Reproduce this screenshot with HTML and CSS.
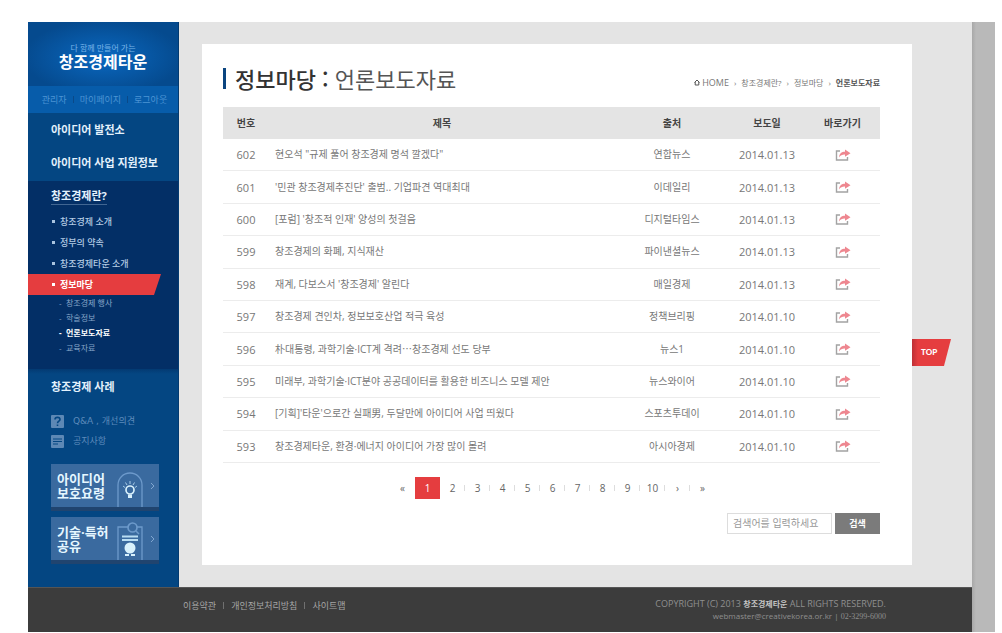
FILE: index.html
```html
<!DOCTYPE html>
<html lang="ko">
<head>
<meta charset="utf-8">
<title>창조경제타운 - 언론보도자료</title>
<link rel="stylesheet" href="styles.css">
</head>
<body>
<svg width="0" height="0" class="defs" aria-hidden="true">
  <symbol id="share" viewBox="0 0 16 12">
    <path d="M5 2H1.5v9h11V8" fill="none" stroke="#a3a3a3" stroke-width="1.4"/>
    <path d="M4 8.5C4.500 4.500 6.500 2.800 10 2.800V.5L15.500 4.200 10 7.800V5.500C7.500 5.400 5.500 6 4 8.500z" fill="#ee8790"/>
  </symbol>
</svg>
<div class="page">
  <div class="site">
    <div class="columns">
      <aside class="sidebar">
        <a class="brand" href="#"><span class="brand-sub">다 함께 만들어 가는</span><span class="brand-name">창조경제타운</span></a>
        <div class="util"><a href="#">관리자</a><i></i><a href="#">마이페이지</a><i></i><a href="#">로그아웃</a></div>
        <nav>
          <div class="group"><a class="nav-item" href="#">아이디어 발전소</a><a class="nav-item" href="#">아이디어 사업 지원정보</a></div>
          <div class="open">
            <a class="open-title" href="#">창조경제란?</a>
            <ul class="sub">
              <li><a href="#">창조경제 소개</a></li>
              <li><a href="#">정부의 약속</a></li>
              <li><a href="#">창조경제타운 소개</a></li>
              <li class="active"><a href="#">정보마당</a></li>
            </ul>
            <ul class="leaf">
              <li><a href="#">창조경제 행사</a></li>
              <li><a href="#">학술정보</a></li>
              <li class="current"><a href="#">언론보도자료</a></li>
              <li><a href="#">교육자료</a></li>
            </ul>
          </div>
          <div class="group after"><a class="nav-item" href="#">창조경제 사례</a></div>
        </nav>
        <div class="help">
          <a href="#"><svg width="13" height="13" viewBox="0 0 13 13"><rect width="13" height="13" rx="1" fill="#5d88b5"/><path d="M4 4.500C4 1.700 9 1.700 9 4.500 9 6.200 6.500 6 6.500 8.200M6.500 9.500v1.600" fill="none" stroke="#044682" stroke-width="1.600"/></svg>Q&amp;A , 개선의견</a>
          <a href="#"><svg width="13" height="13" viewBox="0 0 13 13"><rect width="13" height="13" rx="1" fill="#5d88b5"/><path d="M2 4h9M2 6.500h9M2 9h5" stroke="#044682"/></svg>공지사항</a>
        </div>
        <div class="banners">
          <a class="banner" href="#"><span>아이디어<br>보호요령</span>
            <svg width="26" height="35" viewBox="0 0 26 35" fill="none"><path d="M1 35V13a12 12 0 0 1 24 0V35" stroke="#6d9acb" stroke-width="1.300"/><circle cx="13" cy="18" r="4" stroke="#d8f1fc" stroke-width="1.700"/><path d="M11 22.500h4v3.500h-4z" fill="#d8f1fc"/><path d="M13 9v3M8.500 10.500l1.500 2.500M17.500 10.500L16 13M6 14l2 1.500M20 14l-2 1.500" stroke="#a9cde9"/></svg>
            <svg class="chev" width="5" height="8" viewBox="0 0 5 8"><path d="M1 1l3 3-3 3" fill="none" stroke="#80a6d0"/></svg></a>
          <a class="banner" href="#"><span>기술·특허<br>공유</span>
            <svg width="26" height="39" viewBox="0 0 26 39" fill="none"><path d="M1 39V6h10M20 6h5v33" stroke="#6d9acb" stroke-width="1.300"/><circle cx="15.500" cy="6.500" r="4.500" stroke="#6d9acb" stroke-width="1.700"/><path d="M19 10l3 3" stroke="#6d9acb" stroke-width="1.500"/><path d="M5 15.500h16M5 19h16" stroke="#b9ddf3" stroke-width="2.200"/><circle cx="13" cy="27" r="5.500" fill="#d8f1fc"/><path d="M8 33h4v2H8zM14 33h4v2h-4z" fill="#d8f1fc"/></svg>
            <svg class="chev" width="5" height="8" viewBox="0 0 5 8"><path d="M1 1l3 3-3 3" fill="none" stroke="#80a6d0"/></svg></a>
        </div>
      </aside>
      <main class="content">
        <section class="card">
          <header class="heading">
            <h1><b>정보마당 :</b> 언론보도자료</h1>
            <div class="crumbs"><svg width="6" height="7" viewBox="0 0 6 7"><path d="M.5 3.500L3 1l2.500 2.500M1.200 3v3h3.600V3" fill="none" stroke="#555"/></svg><a href="#">HOME</a><span>›</span><a href="#">창조경제란?</a><span>›</span><a href="#">정보마당</a><span>›</span><b>언론보도자료</b></div>
          </header>
          <table class="news">
            <thead><tr><th class="num">번호</th><th>제목</th><th class="src">출처</th><th class="date">보도일</th><th class="go">바로가기</th></tr></thead>
            <tbody>
              <tr><td>602</td><td class="title">현오석 "규제 풀어 창조경제 명석 깔겠다"</td><td>연합뉴스</td><td>2014.01.13</td><td><a href="#" aria-label="바로가기"><svg width="16" height="12"><use href="#share"/></svg></a></td></tr>
              <tr><td>601</td><td class="title">'민관 창조경제추진단' 출범.. 기업파견 역대최대</td><td>이데일리</td><td>2014.01.13</td><td><a href="#" aria-label="바로가기"><svg width="16" height="12"><use href="#share"/></svg></a></td></tr>
              <tr><td>600</td><td class="title">[포럼] '창조적 인재' 양성의 첫걸음</td><td>디지털타임스</td><td>2014.01.13</td><td><a href="#" aria-label="바로가기"><svg width="16" height="12"><use href="#share"/></svg></a></td></tr>
              <tr><td>599</td><td class="title">창조경제의 화폐, 지식재산</td><td>파이낸셜뉴스</td><td>2014.01.13</td><td><a href="#" aria-label="바로가기"><svg width="16" height="12"><use href="#share"/></svg></a></td></tr>
              <tr><td>598</td><td class="title">재계, 다보스서 '창조경제' 알린다</td><td>매일경제</td><td>2014.01.13</td><td><a href="#" aria-label="바로가기"><svg width="16" height="12"><use href="#share"/></svg></a></td></tr>
              <tr><td>597</td><td class="title">창조경제 견인차, 정보보호산업 적극 육성</td><td>정책브리핑</td><td>2014.01.10</td><td><a href="#" aria-label="바로가기"><svg width="16" height="12"><use href="#share"/></svg></a></td></tr>
              <tr><td>596</td><td class="title">朴대통령, 과학기술·ICT계 격려⋯창조경제 선도 당부</td><td>뉴스1</td><td>2014.01.10</td><td><a href="#" aria-label="바로가기"><svg width="16" height="12"><use href="#share"/></svg></a></td></tr>
              <tr><td>595</td><td class="title">미래부, 과학기술·ICT분야 공공데이터를 활용한 비즈니스 모델 제안</td><td>뉴스와이어</td><td>2014.01.10</td><td><a href="#" aria-label="바로가기"><svg width="16" height="12"><use href="#share"/></svg></a></td></tr>
              <tr><td>594</td><td class="title">[기획]'타운'으로간 실패男, 두달만에 아이디어 사업 띄웠다</td><td>스포츠투데이</td><td>2014.01.10</td><td><a href="#" aria-label="바로가기"><svg width="16" height="12"><use href="#share"/></svg></a></td></tr>
              <tr><td>593</td><td class="title">창조경제타운, 환경·에너지 아이디어 가장 많이 몰려</td><td>아시아경제</td><td>2014.01.10</td><td><a href="#" aria-label="바로가기"><svg width="16" height="12"><use href="#share"/></svg></a></td></tr>
            </tbody>
          </table>
          <nav class="pager"><a class="plain" href="#">«</a><a class="on plain" href="#">1</a><a href="#">2</a><a href="#">3</a><a href="#">4</a><a href="#">5</a><a href="#">6</a><a href="#">7</a><a href="#">8</a><a href="#">9</a><a href="#">10</a><a href="#">›</a><a class="plain" href="#">»</a></nav>
          <form class="search"><input type="text" aria-label="검색어" placeholder="검색어를 입력하세요"><button type="button">검색</button></form>
          <a class="top" href="#">TOP</a>
        </section>
      </main>
    </div>
    <footer class="footer">
      <div class="links"><a href="#">이용약관</a><i></i><a href="#">개인정보처리방침</a><i></i><a href="#">사이트맵</a></div>
      <div class="copy"><div>COPYRIGHT (C) 2013 <b>창조경제타운</b> ALL RIGHTS RESERVED.</div><div class="contact">webmaster@creativekorea.or.kr | <small>02-3299-6000</small></div></div>
    </footer>
  </div>
  <div class="gutter"></div>
</div>
</body>
</html>
```
FILE: styles.css
```css
* { box-sizing: border-box; }
body {
  margin: 0;
  background: #fff;
  color: #777;
  font: 10px/15px "Open Sans", "Noto Sans CJK KR", sans-serif;
}
a { color: inherit; text-decoration: none; }
ul { margin: 0; padding: 0; list-style: none; }
.defs { position: absolute; }

.page { display: flex; min-height: 100vh; padding: 22px 7px 1px 28px; }
.site { flex: 1; display: flex; flex-direction: column; min-width: 0; }
.gutter { width: 23px; background: linear-gradient(90deg, #a8a8a8, #b9b9b9 4px); }
.columns { flex: 1; display: flex; background: #e4e4e4; }

.sidebar { width: 151px; flex: none; background: #044682; color: #e3f1fc; border-right: 1px solid #033a70; }
.brand {
  display: flex;
  flex-direction: column;
  align-items: center;
  height: 64px;
  padding-top: 20px;
  background: radial-gradient(ellipse at 50% 55%, #0a68c0, #054a8e 75%);
}
.brand-sub { font-size: 8px; line-height: 11px; color: #79b4e8; }
.brand-name { font-size: 16px; line-height: 19px; font-weight: 700; color: #fff; }
.util {
  display: flex;
  justify-content: center;
  align-items: center;
  gap: 6px;
  height: 27px;
  padding-left: 3px;
  background: #075caa;
  color: #4c94d4;
  font-size: 9px;
}
.util i { width: 1px; height: 7px; background: #0a4988; }
.group { padding: 0 0 2px; }
.nav-item { display: block; padding-left: 23px; font-size: 11px; line-height: 33px; font-weight: 700; }
.open { padding: 6px 0 14px; background: #032f66; }
.open-title {
  display: inline-block;
  margin: 0 0 6px 23px;
  border-bottom: 1px solid #416692;
  font-size: 11px;
  line-height: 17px;
  font-weight: 700;
}
.sub { font-size: 9px; font-weight: 500; color: #b3cbe3; }
.sub li { display: flex; align-items: center; gap: 5px; height: 21px; padding-left: 24px; }
.sub li::before { content: ""; width: 3px; height: 3px; background: #a9c4df; }
.sub .active {
  margin-right: 17px;
  background: #e53d3f;
  clip-path: polygon(0 0, 100% 0, calc(100% - 7px) 100%, 0 100%);
  color: #fff;
  font-weight: 700;
}
.sub .active::before { background: #fff; }
.leaf { padding-left: 31px; font-size: 8px; color: #87a6c8; }
.leaf li { display: flex; }
.leaf li::before { content: "-"; width: 7px; }
.leaf .current { color: #fff; font-weight: 700; }
.after { padding-top: 1px; background: linear-gradient(#033a72, #044682 5px); }
.help {
  display: flex;
  flex-direction: column;
  gap: 7px;
  padding: 10px 0 0 23px;
  color: #5d8bbb;
  font: 9px/13px "DejaVu Sans", "Noto Sans CJK KR", sans-serif;
}
.help a { display: flex; gap: 9px; }
.banners { display: flex; flex-direction: column; gap: 6px; padding: 16px 19px 22px 23px; }
.banner {
  display: flex;
  align-items: flex-end;
  height: 47px;
  padding-left: 6px;
  background: #3a6a9f;
  border-bottom: 4px solid #20446f;
  color: #e6f7ff;
  font-size: 13px;
  line-height: 14px;
  font-weight: 700;
}
.banner span { width: 60px; align-self: center; white-space: nowrap; }
.banner .chev { align-self: center; margin-left: 7px; }

.content { flex: 1; min-width: 0; padding: 22px 60px 22px 23px; }
.card { position: relative; padding: 20px 32px 31px 21px; background: #fff; }
.heading { display: flex; justify-content: space-between; align-items: center; height: 29px; margin-bottom: 14px; }
h1 {
  margin: 0;
  padding-left: 9px;
  border-left: 3px solid #0b4580;
  color: #555;
  font: 400 22px/21px "Noto Sans CJK KR", sans-serif;
}
h1 b { color: #333; font-weight: 500; }
.crumbs { display: flex; align-items: center; gap: 5px; padding-top: 8px; font-size: 8px; line-height: 12px; color: #777; }
.crumbs svg + a { margin-left: -3px; font-size: 9px; }
.crumbs b { color: #555; }

.news { width: 100%; height: 356px; table-layout: fixed; border-spacing: 0; text-align: center; }
.news th { height: 32px; padding: 0; background: #e4e4e4; color: #444; font-weight: 700; }
.news td { padding: 0; border-bottom: 1px solid #ececec; font-size: 11px; }
.news td:nth-child(3) { font-size: 10px; }
.news .title { padding-left: 6px; text-align: left; font-size: 10px; }
.news svg { display: block; margin: 0 auto; }
.num { width: 46px; }
.src { width: 114px; }
.date { width: 76px; }
.go { width: 75px; }

.pager { display: flex; justify-content: center; margin: 14px 0; padding-left: 2px; color: #666; line-height: 22px; text-align: center; }
.pager a { position: relative; width: 25px; }
.pager a:not(.plain)::after {
  content: "";
  position: absolute;
  right: 0;
  top: 8px;
  width: 1px;
  height: 6px;
  background: #ddd;
}
.pager .on { background: #e53d3f; color: #fff; }

.search { display: flex; justify-content: flex-end; gap: 3px; height: 21px; }
.search input { width: 105px; padding: 0 5px; border: 1px solid #ddd; font: inherit; }
.search input::placeholder { color: #999; }
.search button { width: 45px; padding: 0; border: 0; background: #7b7b7b; color: #fff; font: inherit; font-size: 9px; font-weight: 700; }
.top {
  position: absolute;
  left: 100%;
  top: 295px;
  width: 39px;
  background: linear-gradient(90deg, #bd3036, #e53d3f 6px);
  clip-path: polygon(0 0, 100% 0, calc(100% - 7px) 100%, 0 100%);
  padding-left: 9px;
  color: #fff;
  font: 900 8px/27px Lato, sans-serif;
}

.footer {
  display: flex;
  justify-content: space-between;
  min-height: 45px;
  padding: 10px 86px 5px 155px;
  background: #3c3c3c;
  border-top: 1px solid #555;
  color: #a5a5a5;
  font-size: 9px;
}
.links { display: flex; align-items: center; gap: 7px; height: 15px; }
.links i { width: 1px; height: 7px; background: #707070; }
.copy { text-align: right; line-height: 12px; color: #8f8f8f; }
.copy b { color: #c4c4c4; font-size: 8px; }
.contact { font-size: 8px; }
.copy small { font: 8px "Liberation Serif", serif; }
```
